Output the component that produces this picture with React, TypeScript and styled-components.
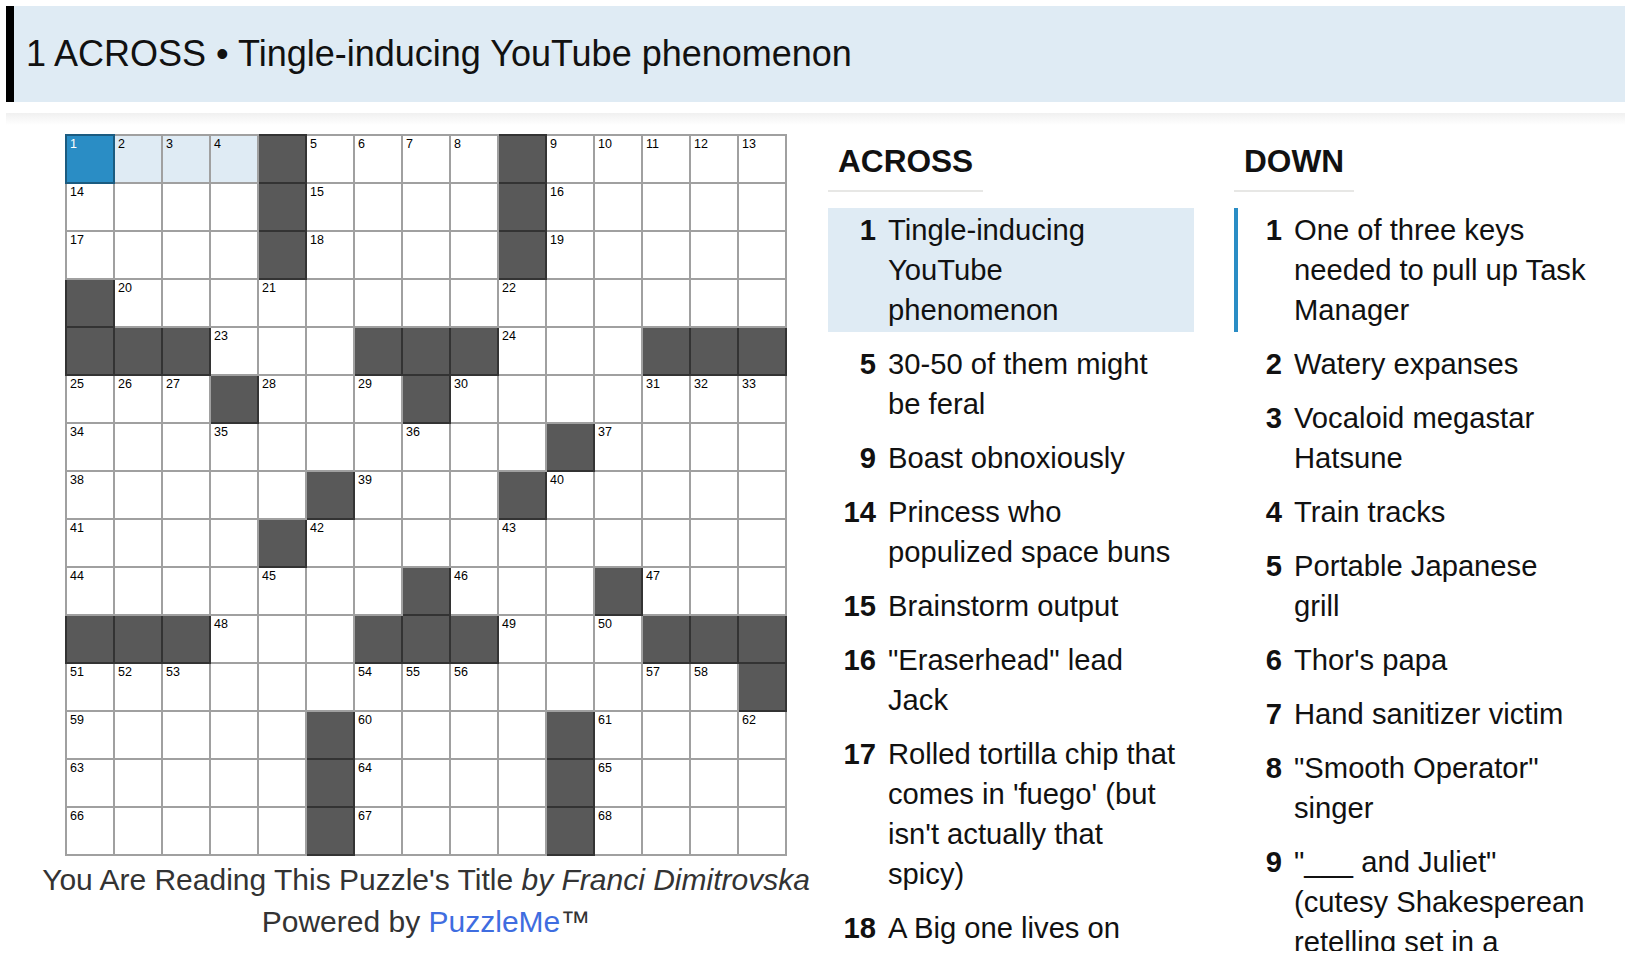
import React from "react";
import styled, { createGlobalStyle } from "styled-components";

const GlobalStyle = createGlobalStyle`
  html, body {
    margin: 0;
    padding: 0;
    background: #fff;
  }
  body {
    font-family: "Liberation Sans", Arial, Helvetica, sans-serif;
    color: #111;
    overflow: hidden;
  }
`;

const LAYOUT = [
  "....#....#.....",
  "....#....#.....",
  "....#....#.....",
  "#..............",
  "###...###...###",
  "...#...#.......",
  "..........#....",
  ".....#...#.....",
  "....#..........",
  ".......#...#...",
  "###...###...###",
  "..............#",
  ".....#....#....",
  ".....#....#....",
  ".....#....#....",
];

const ACROSS = [
  { n: 1, text: "Tingle-inducing YouTube phenomenon", on: true },
  { n: 5, text: "30-50 of them might be feral" },
  { n: 9, text: "Boast obnoxiously" },
  { n: 14, text: "Princess who populized space buns" },
  { n: 15, text: "Brainstorm output" },
  { n: 16, text: "\"Eraserhead\" lead Jack" },
  { n: 17, text: "Rolled tortilla chip that comes in 'fuego' (but isn't actually that spicy)" },
  { n: 18, text: "A Big one lives on Sesame Street" },
];

const DOWN = [
  { n: 1, text: "One of three keys needed to pull up Task Manager", related: true },
  { n: 2, text: "Watery expanses" },
  { n: 3, text: "Vocaloid megastar Hatsune" },
  { n: 4, text: "Train tracks" },
  { n: 5, text: "Portable Japanese grill" },
  { n: 6, text: "Thor's papa" },
  { n: 7, text: "Hand sanitizer victim" },
  { n: 8, text: "\"Smooth Operator\" singer" },
  { n: 9, text: "\"___ and Juliet\" (cutesy Shakesperean retelling set in a garden)" },
];

type Kind = "open" | "block" | "active" | "word";

const Page = styled.div`
  width: 1628px;
  height: 976px;
  padding: 6px 3px 0 6px;
  box-sizing: border-box;
  overflow: hidden;
`;

const CurrentClue = styled.div`
  height: 96px;
  box-sizing: border-box;
  background: #dfebf4;
  border-left: 8px solid #000;
  padding-left: 12px;
  display: flex;
  align-items: center;
  font-size: 36px;
  color: #111;
  white-space: nowrap;
`;

const Shade = styled.div`
  height: 12px;
  margin-top: 11px;
  background: linear-gradient(#f0f0f0, #fff);
`;

const Main = styled.div`
  display: flex;
  margin-top: 9px;
  padding-left: 18px;
`;

const BoardColumn = styled.div`
  width: 804px;
  display: flex;
  flex-direction: column;
  align-items: center;
`;

const Board = styled.div`
  display: grid;
  grid-template-columns: 50px repeat(14, 48px);
  grid-template-rows: 50px repeat(14, 48px);
`;

const cellBg: Record<Kind, string> = {
  open: "#fff",
  block: "#595959",
  active: "#2a8dc5",
  word: "#dfebf4",
};

const cellLine: Record<Kind, string> = {
  open: "#a0a0a0",
  block: "#333",
  active: "#1b5b80",
  word: "#a0a0a0",
};

const Cell = styled.div<{ $kind: Kind; $row: number; $col: number }>`
  box-sizing: border-box;
  background: ${(p) => cellBg[p.$kind]};
  border-right: 2px solid ${(p) => cellLine[p.$kind]};
  border-bottom: 2px solid ${(p) => cellLine[p.$kind]};
  border-left: ${(p) => (p.$col === 0 ? `2px solid ${cellLine[p.$kind]}` : "none")};
  border-top: ${(p) => (p.$row === 0 ? `2px solid ${cellLine[p.$kind]}` : "none")};
  color: ${(p) => (p.$kind === "active" ? "#fff" : "#000")};
  font-size: 12.5px;
  line-height: 1;
  padding: 2px 0 0 3px;
`;

const Credit = styled.div`
  margin-top: 3px;
  font-size: 30px;
  line-height: 42px;
  color: #333;
  text-align: center;
  white-space: nowrap;
`;

const Link = styled.span`
  color: #3f6de0;
`;

const ClueColumn = styled.div<{ $gap: number }>`
  width: 366px;
  height: 817px;
  margin-left: ${(p) => p.$gap}px;
  padding-top: 8px;
  box-sizing: border-box;
  display: flex;
  flex-direction: column;
`;

const Heading = styled.h2`
  align-self: flex-start;
  margin: 0;
  padding: 0 10px 10px;
  font-size: 31.6px;
  line-height: 38px;
  font-weight: bold;
  color: #111;
  border-bottom: 2px solid #e7e7e5;
`;

const ClueList = styled.ul`
  list-style: none;
  margin: 16px 0 0;
  padding: 0;
  flex: 1;
  overflow: hidden;
`;

const ClueItem = styled.li<{ $on?: boolean; $related?: boolean }>`
  display: flex;
  padding: 2px 0;
  margin-bottom: 10px;
  border-left: 4px solid ${(p) => (p.$related ? "#2a8dc5" : "transparent")};
  background: ${(p) => (p.$on ? "#dfebf4" : "transparent")};
  font-size: 29.2px;
  line-height: 40px;
  color: #111;
`;

const ClueNum = styled.span`
  flex-shrink: 0;
  width: 44px;
  margin-right: 12px;
  text-align: right;
  font-weight: bold;
`;

const ClueText = styled.span`
  width: 293px;
`;

function numberGrid(rows: string[]) {
  const nums: (number | null)[][] = [];
  let n = 1;
  rows.forEach((row, r) => {
    nums.push([]);
    for (let c = 0; c < row.length; c++) {
      if (row[c] === "#") {
        nums[r].push(null);
        continue;
      }
      const across = (c === 0 || row[c - 1] === "#") && c + 1 < row.length && row[c + 1] !== "#";
      const down =
        (r === 0 || rows[r - 1][c] === "#") && r + 1 < rows.length && rows[r + 1][c] !== "#";
      nums[r].push(across || down ? n++ : null);
    }
  });
  return nums;
}

const NUMS = numberGrid(LAYOUT);

function kindOf(r: number, c: number): Kind {
  if (LAYOUT[r][c] === "#") return "block";
  if (r === 0 && c === 0) return "active";
  if (r === 0 && c < 4) return "word";
  return "open";
}

export default function App() {
  return (
    <Page>
      <GlobalStyle />
      <CurrentClue>1 ACROSS • Tingle-inducing YouTube phenomenon</CurrentClue>
      <Shade />
      <Main>
        <BoardColumn>
          <Board>
            {LAYOUT.map((row, r) =>
              row.split("").map((_, c) => (
                <Cell key={`${r}-${c}`} $kind={kindOf(r, c)} $row={r} $col={c}>
                  {NUMS[r][c] ?? ""}
                </Cell>
              ))
            )}
          </Board>
          <Credit>
            You Are Reading This Puzzle's Title <i>by Franci Dimitrovska</i>
            <br />
            Powered by <Link>PuzzleMe</Link>™
          </Credit>
        </BoardColumn>
        <ClueColumn $gap={0}>
          <Heading>ACROSS</Heading>
          <ClueList>
            {ACROSS.map((clue) => (
              <ClueItem key={clue.n} $on={clue.on}>
                <ClueNum>{clue.n}</ClueNum>
                <ClueText>{clue.text}</ClueText>
              </ClueItem>
            ))}
          </ClueList>
        </ClueColumn>
        <ClueColumn $gap={40}>
          <Heading>DOWN</Heading>
          <ClueList>
            {DOWN.map((clue) => (
              <ClueItem key={clue.n} $related={clue.related}>
                <ClueNum>{clue.n}</ClueNum>
                <ClueText>{clue.text}</ClueText>
              </ClueItem>
            ))}
          </ClueList>
        </ClueColumn>
      </Main>
    </Page>
  );
}
